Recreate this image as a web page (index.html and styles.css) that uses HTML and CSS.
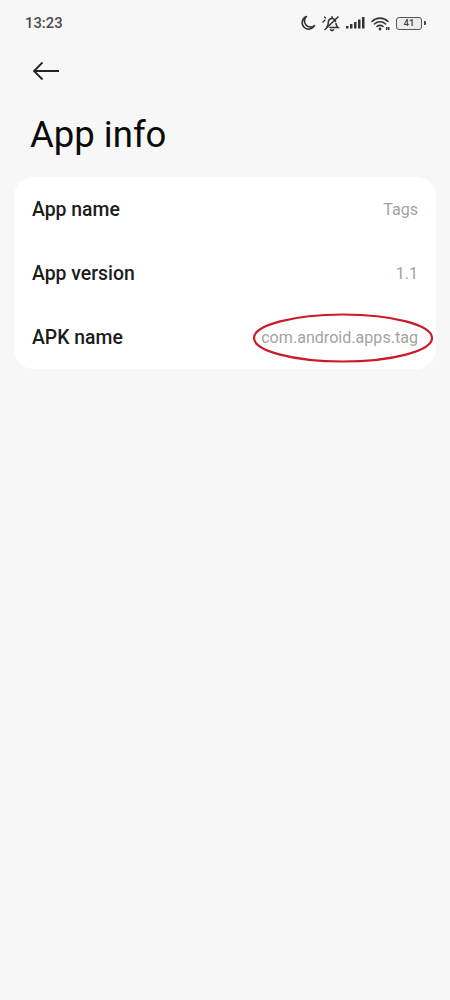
FILE: index.html
```html
<!DOCTYPE html>
<html lang="en">
<head>
<meta charset="utf-8">
<title>App info</title>
<link rel="stylesheet" href="styles.css">
</head>
<body>
<div class="status">
  <span class="time">13:23</span>
  <div class="status-icons">
    <svg class="ic" width="16" height="16" viewBox="0 0 16 16"><path d="M6.500 1.500A6.500 6.500 0 1 0 14.500 10.500 6 6 0 0 1 6.500 1.500Z" fill="none" stroke="#333" stroke-width="1.600" stroke-linejoin="round"/></svg>
    <svg class="ic" width="19" height="17" viewBox="0 0 19 17"><path d="M5 12c1.500-1.500 1-3 1.300-5 .3-2 2-3.500 3.700-3.500 1.800 0 3.200 1.200 3.500 3M14 8.500c.2 1.800.8 3 2 4H8M8.500 14.800c.8.8 2.200.8 3 0M10 1.800v1.700" fill="none" stroke="#333" stroke-width="1.600" stroke-linecap="round"/><path d="M3 14.500 16 2" stroke="#333" stroke-width="1.600" stroke-linecap="round"/><path d="M1 7 3 5M3.500 3 2.500 2" stroke="#333" stroke-width="1.300" stroke-linecap="round"/></svg>
    <svg class="ic" width="19" height="12" viewBox="0 0 19 12"><rect x="0" y="9" width="2.500" height="2.500" fill="#333"/><rect x="4" y="7" width="2.500" height="4.500" fill="#333"/><rect x="8" y="5" width="2.500" height="6.500" fill="#333"/><rect x="12" y="2.500" width="2.500" height="9" fill="#333"/><rect x="16" y="0" width="2.500" height="11.500" fill="#333"/></svg>
    <svg class="ic" width="19" height="15" viewBox="0 0 19 15"><path d="M1 5.500C5.500 1 12.500 1 17 5.500M3.500 8C6.500 5 11.500 5 14.500 8M6 10.500c1.500-1.500 4.500-1.500 6 0" fill="none" stroke="#333" stroke-width="1.600" stroke-linecap="round"/><circle cx="9" cy="13" r="1.400" fill="#333"/><rect x="15" y="11" width="1.500" height="3" fill="#333"/><rect x="17" y="11" width="1.500" height="3" fill="#333"/></svg>
    <div class="battery"><span class="battery-num">41</span></div>
    <span class="battery-tip"></span>
  </div>
</div>
<div class="back">
  <svg width="28" height="20" viewBox="0 0 28 20"><path d="M27 10H2M10.500 1.500 2 10l8.500 8.500" fill="none" stroke="#222" stroke-width="1.800"/></svg>
</div>
<h1 class="title">App info</h1>
<div class="card">
  <div class="row"><span class="label">App name</span><span class="value">Tags</span></div>
  <div class="row"><span class="label">App version</span><span class="value">1.1</span></div>
  <div class="row">
    <span class="label">APK name</span><span class="value">com.android.apps.tag</span>
    <svg class="oval" width="182" height="52" viewBox="0 0 182 52"><ellipse cx="91" cy="26" rx="89" ry="23.500" fill="none" stroke="#cc1a28" stroke-width="2.200"/></svg>
  </div>
</div>
</body>
</html>
```
FILE: styles.css
```css
* { box-sizing: border-box; }
html, body { margin: 0; padding: 0; }
body {
  width: 450px;
  height: 1000px;
  background: #f7f7f7;
  font-family: Roboto, "Liberation Sans", sans-serif;
  color: #000;
  overflow: hidden;
}
.status {
  display: flex;
  align-items: center;
  justify-content: space-between;
  height: 46px;
  padding: 0 24px 0 25px;
}
.time { font-size: 14.800px; font-weight: 500; color: #4a4a4a; }
.status-icons { display: flex; align-items: center; gap: 5.500px; }
.ic { display: block; }
.battery {
  width: 26px;
  height: 13px;
  border: 1.300px solid #555;
  border-radius: 3px;
  display: flex;
  align-items: center;
  justify-content: center;
  background: #ececec;
  margin-left: 1px;
}
.battery-num { font-size: 9.500px; font-weight: 500; color: #444; line-height: 1; }
.battery-tip { width: 2px; height: 4px; background: #444; margin-left: -3.500px; border-radius: 0 1px 1px 0; }
.back { height: 20px; margin: 15px 0 0 32px; }
.back svg { display: block; }
.title {
  margin: 33px 0 0 30px;
  font-size: 36.500px;
  line-height: 42px;
  font-weight: 400;
  color: #0a0a0a;
}
.card {
  margin: 21px 14px 0;
  padding: 0 18px;
  background: #fff;
  border-radius: 20px;
  height: 192px;
}
.row {
  position: relative;
  display: flex;
  align-items: center;
  justify-content: space-between;
  height: 64px;
}
.label { font-size: 19.400px; font-weight: 500; color: #1c1c1c; }
.value { font-size: 16.100px; color: #a3a3a3; }
.oval { position: absolute; right: -16px; top: 7px; }
```
